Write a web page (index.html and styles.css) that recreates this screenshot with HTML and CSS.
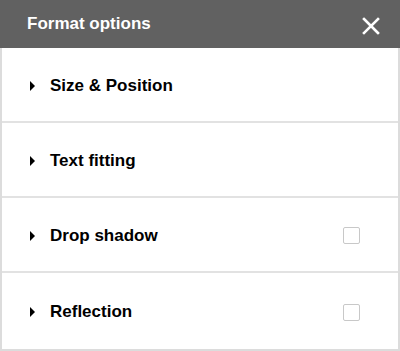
FILE: index.html
```html
<!DOCTYPE html>
<html lang="en">
<head>
    <meta charset="UTF-8">
    <title>Format options</title>
    <link rel="stylesheet" href="styles.css">
</head>
<body>
    <div class="panel">
        <div class="panel-header">
            <h1 class="panel-title">Format options</h1>
            <button class="close-btn" aria-label="Close">
                <svg width="18" height="18" viewBox="0 0 18 18">
                    <path d="M2 2L16 16M16 2L2 16" stroke="#fff" stroke-width="2.6" stroke-linecap="square"/>
                </svg>
            </button>
        </div>

        <div class="option-row">
            <span class="arrow"></span>
            <span class="option-label">Size &amp; Position</span>
        </div>
        <div class="option-row">
            <span class="arrow"></span>
            <span class="option-label">Text fitting</span>
        </div>
        <div class="option-row">
            <span class="arrow"></span>
            <span class="option-label">Drop shadow</span>
            <span class="checkbox"></span>
        </div>
        <div class="option-row">
            <span class="arrow"></span>
            <span class="option-label">Reflection</span>
            <span class="checkbox"></span>
        </div>
    </div>
</body>
</html>
```

FILE: styles.css
```css
* {
    margin: 0;
    padding: 0;
    box-sizing: border-box;
    font-family: 'Liberation Sans', Arial, sans-serif;
}

body {
    background: #fff;
}

.panel {
    width: 400px;
    height: 351px;
    border: 2px solid #dcdcdc;
    border-top: 0;
    display: flex;
    flex-direction: column;
}

.panel-header {
    height: 48px;
    margin: 0 -2px;
    background: #616161;
    display: flex;
    justify-content: space-between;
    align-items: center;
    padding: 0 20px 0 27px;
}

.panel-title {
    color: white;
    font-size: 17px;
    font-weight: 700;
}

.close-btn {
    background: none;
    border: none;
    cursor: pointer;
    display: flex;
    margin-top: 4px;
}

.option-row {
    height: 75px;
    border-bottom: 2px solid #e2e2e2;
    display: flex;
    align-items: center;
    padding: 2px 38px 0 28px;
}

.option-row:last-child {
    height: 76px;
    border-bottom: none;
}

.arrow {
    width: 0;
    height: 0;
    border-top: 5px solid transparent;
    border-bottom: 5px solid transparent;
    border-left: 5px solid #000;
    margin-right: 15px;
}

.option-label {
    flex: 1;
    font-size: 17px;
    font-weight: 700;
    color: #000;
}

.checkbox {
    width: 17px;
    height: 17px;
    border: 1px solid #c8c8c8;
    border-radius: 2px;
}
```
